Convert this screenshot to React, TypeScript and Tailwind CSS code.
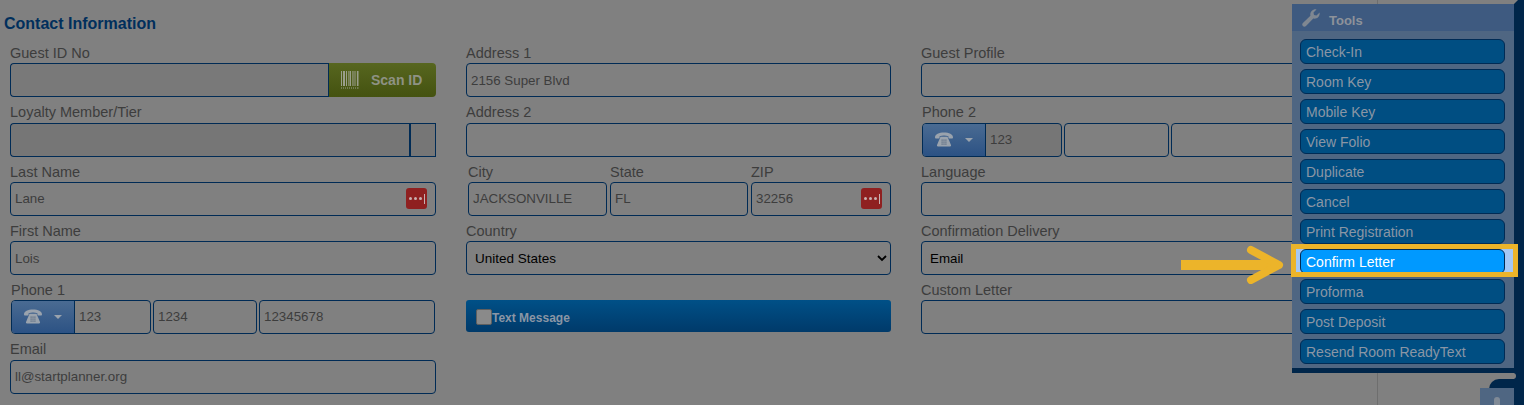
const FONT = "font-['Liberation_Sans',Arial,sans-serif]";

const toolItems = [
  "Check-In",
  "Room Key",
  "Mobile Key",
  "View Folio",
  "Duplicate",
  "Cancel",
  "Print Registration",
  "Confirm Letter",
  "Proforma",
  "Post Deposit",
  "Resend Room ReadyText",
];

function Label({ children, className = "" }: { children: React.ReactNode; className?: string }) {
  return <div className={`h-[16px] whitespace-nowrap text-[14.5px] leading-[16px] text-[#3d3d3d] ${className}`}>{children}</div>;
}

function Input({ value, className = "", dots = false }: { value?: string; className?: string; dots?: boolean }) {
  return (
    <div className={`flex h-[34px] items-center justify-between rounded-[4px] border border-[#002b55] pl-[4px] pr-[8px] text-[13.33px] text-[#3d3d3d] ${className}`}>
      <span className="pt-px">{value}</span>
      {dots && <DotsBadge />}
    </div>
  );
}

function DotsBadge() {
  return (
    <span className="flex h-[21px] w-[21px] items-center justify-center gap-[2px] rounded-[3px] bg-[#8f2020]">
      <span className="h-[3px] w-[3px] rounded-full bg-[#c9b0b0]" />
      <span className="h-[3px] w-[3px] rounded-full bg-[#c9b0b0]" />
      <span className="h-[3px] w-[3px] rounded-full bg-[#c9b0b0]" />
      <span className="h-[10px] w-px bg-[#c9b0b0]" />
    </span>
  );
}

function PhoneIcon() {
  return (
    <svg width="18" height="16" viewBox="0 0 18 16" fill="#9aa3ad">
      <path d="M0 5.500C0 2 4 .5 9 .5s9 1.500 9 5c0 .6-.3 1-.8 1h-3c-.5 0-.8-.4-.8-1V4.200C12 3.600 10.500 3.400 9 3.400s-3 .2-4.400.8v1.300c0 .6-.3 1-.8 1h-3C.3 6.500 0 6.100 0 5.500z" />
      <path d="M5.500 4.800h7l3.500 8.200c.2.6 0 1.500-1 1.500H3c-1 0-1.200-.9-1-1.500z" />
      <g fill="#5a6b80">
        <rect x="6.500" y="7.500" width="1.200" height="1.200" />
        <rect x="8.400" y="7.500" width="1.200" height="1.200" />
        <rect x="10.300" y="7.500" width="1.200" height="1.200" />
        <rect x="6.500" y="9.500" width="1.200" height="1.200" />
        <rect x="8.400" y="9.500" width="1.200" height="1.200" />
        <rect x="10.300" y="9.500" width="1.200" height="1.200" />
        <rect x="6.500" y="11.500" width="1.200" height="1.200" />
        <rect x="8.400" y="11.500" width="1.200" height="1.200" />
        <rect x="10.300" y="11.500" width="1.200" height="1.200" />
      </g>
    </svg>
  );
}

function PhoneRow({ a, b, c, firstBg = "", midWidth = "w-[104px]" }: { a?: string; b?: string; c?: string; firstBg?: string; midWidth?: string }) {
  return (
    <div className="flex h-[34px] gap-[2px] text-[13.33px] text-[#3d3d3d]">
      <div className={`flex w-[140px] rounded-[4px] border border-[#002b55] ${firstBg}`}>
        <div className="flex w-[63px] items-center gap-[12px] rounded-l-[3px] border-r border-[#002b55] bg-gradient-to-b from-[#4a6b92] to-[#2c5284] pl-[12px]">
          <PhoneIcon />
          <span className="h-0 w-0 border-x-[4px] border-t-[4px] border-x-transparent border-t-[#9aa3ad]" />
        </div>
        <div className="flex items-center pl-[4px]">{a}</div>
      </div>
      <div className={`flex items-center rounded-[4px] border border-[#002b55] pl-[4px] ${midWidth}`}>{b}</div>
      <div className="flex flex-1 items-center rounded-[4px] border border-[#002b55] pl-[4px]">{c}</div>
    </div>
  );
}

function Barcode() {
  return (
    <svg width="18" height="18" viewBox="0 0 18 18" fill="#9a9f8c">
      <path d="M0 0h1v15H0zM2 0h2v15H2zM5 0h1v15H5zM7 0h.6v15H7zM8.500 0h1.500v15H8.500zM11 0h.6v15H11zM12.500 0h1v15h-1zM14.500 0h.6v15h-.6zM16 0h1.500v15H16z" />
      <path d="M0 16.500h1v1H0zM2 16.500h1v1H2zM4 16.500h1v1H4zM6 16.500h1v1H6zM8 16.500h1v1H8zM10 16.500h1v1h-1zM12 16.500h1v1h-1zM14 16.500h1v1h-1zM16 16.500h1.500v1H16z" />
    </svg>
  );
}

function ToolsPanel() {
  return (
    <div className="absolute left-[1292px] top-[4px] w-[222px]">
      <div className="bg-[#4f6682]">
        <div className="flex h-[27px] items-center bg-[#3e5a80] pl-[10px]">
          <svg width="18" height="18" viewBox="0 0 18 18" fill="#7f8791">
            <path d="M17.600 3.600c.3 1.700-.2 3.500-1.500 4.700-1.300 1.300-3.100 1.700-4.800 1.300L4 17c-.9.900-2.300.9-3.100 0-.9-.9-.9-2.200 0-3.100L8.400 6.700C8 5 8.400 3.200 9.700 1.900 11 .6 12.800.1 14.500.4l-3 3 .5 2.500 2.500.6z" />
          </svg>
          <span className="ml-[9px] pt-[6px] text-[13px] font-bold text-[#8d929a]">Tools</span>
        </div>
        <div className="flex flex-col gap-[5px] pb-[4px] pl-[8px] pr-[9px] pt-[8px]">
          {toolItems.map((item) =>
            item === "Confirm Letter" ? (
              <div key={item} className="relative h-[25px]">
                <div className="absolute -bottom-[3px] -left-[9px] -right-[13px] -top-[5px] bg-[#a5c8f5]" />
                <div className="relative flex h-[25px] items-center rounded-[6px] border border-[#002b55] bg-[#0099ff] pl-[5px] pt-px text-[14px] text-white">
                  {item}
                </div>
                <div className="absolute -bottom-[3px] -left-[9px] -right-[13px] -top-[5px] border-[5px] border-[#ecb42a]" />
              </div>
            ) : (
              <div key={item} className="flex h-[25px] items-center rounded-[6px] border border-[#002b55] bg-[#004e82] pl-[5px] pt-px text-[14px] text-[#8a96a5]">
                {item}
              </div>
            ),
          )}
        </div>
      </div>
      <div className="h-[5px] bg-[#00264a]" />
    </div>
  );
}

function RightEdge() {
  return (
    <>
      <div className="absolute bottom-0 left-[1514px] top-0 w-[10px] bg-[#00264a]" />
      <div className="absolute left-[1514px] top-0 h-0 w-0 border-r-[4px] border-t-[4px] border-r-transparent border-t-[#808080]" />
      <div className="absolute left-[1489px] top-[379px] h-[10px] w-[25px] rounded-tl-[11px] bg-[#00264a]" />
      <div className="absolute left-[1500px] top-[373px] h-[6px] w-[16px] rounded-r-full bg-[#808080]" />
      <div className="absolute left-[1480px] top-[388px] flex h-[17px] w-[34px] justify-center bg-[#4f6682] pt-[9px]">
        <span className="h-[8px] w-[6px] rounded-t-full bg-[#808a96]" />
      </div>
    </>
  );
}

function Arrow() {
  return (
    <svg className="absolute left-[1178px] top-[244px]" width="110" height="40" viewBox="0 0 110 40" fill="none" stroke="#ecb42a">
      <path d="M3 21h92" strokeWidth="10" />
      <path d="M73 6l28 15-28 15" strokeWidth="8" strokeLinecap="round" strokeLinejoin="round" />
    </svg>
  );
}

export default function App() {
  return (
    <div className={`relative h-[405px] w-[1524px] overflow-hidden bg-[#808080] ${FONT}`}>
      <div className="absolute bottom-0 left-[1377px] top-0 w-px bg-[#6e6e6e]" />
      <div className="pl-[4px] pt-[15px] text-[16px] font-bold leading-[18px] text-[#002f5c]">Contact Information</div>

      <div className="flex gap-[30px] pl-[10px] pt-[12px]">
        {/* left column */}
        <div className="flex w-[426px] flex-col gap-[7.15px]">
          <div>
            <Label>Guest ID No</Label>
            <div className="mt-[2.2px] flex h-[34px]">
              <div className="flex-1 rounded-l-[4px] border border-r-0 border-[#002b55] bg-[#797979]" />
              <div className="flex w-[108px] items-center rounded-r-[4px] border-l border-[#002b55] bg-gradient-to-b from-[#57661f] to-[#445210] pl-[12px] text-[14px] font-bold text-[#8e9284]">
                <Barcode />
                <span className="ml-[12px]">Scan ID</span>
              </div>
            </div>
          </div>
          <div>
            <Label>Loyalty Member/Tier</Label>
            <div className="mt-[2.2px] flex h-[34px]">
              <div className="flex-1 rounded-l-[4px] border border-r-0 border-[#002b55] bg-[#767676]" />
              <div className="w-[27px] border border-l-2 border-[#002b55] bg-[#767676]" />
            </div>
          </div>
          <div>
            <Label>Last Name</Label>
            <Input value="Lane" dots className="mt-[2.2px]" />
          </div>
          <div>
            <Label>First Name</Label>
            <Input value="Lois" className="mt-[2.2px]" />
          </div>
          <div className="px-[1px] pb-[0.7px]">
            <Label>Phone 1</Label>
            <div className="mt-[1.5px]">
              <PhoneRow a="123" b="1234" c="12345678" />
            </div>
          </div>
          <div>
            <Label className="-mt-[1px]">Email</Label>
            <Input value="ll@startplanner.org" className="mt-[3.2px]" />
          </div>
        </div>

        {/* middle column */}
        <div className="flex w-[425px] flex-col gap-[7.15px]">
          <div>
            <Label>Address 1</Label>
            <Input value="2156 Super Blvd" className="mt-[2.2px]" />
          </div>
          <div>
            <Label>Address 2</Label>
            <Input className="mt-[2.2px]" />
          </div>
          <div className="flex gap-[3px]">
            <div className="w-[141px] pl-[2px]">
              <Label>City</Label>
              <Input value="JACKSONVILLE" className="mt-[2.2px]" />
            </div>
            <div className="w-[138px]">
              <Label>State</Label>
              <Input value="FL" className="mt-[2.2px]" />
            </div>
            <div className="flex-1">
              <Label>ZIP</Label>
              <Input value="32256" dots className="mt-[2.2px]" />
            </div>
          </div>
          <div>
            <Label>Country</Label>
            <div className="mt-[2.2px] flex h-[34px] items-center justify-between rounded-[4px] border border-[#002b55] pl-[8px] pr-[3px] text-[13.5px] text-black">
              <span className="pt-px">United States</span>
              <svg width="10" height="7" viewBox="0 0 10 7" fill="none" stroke="#000" strokeWidth="1.800">
                <path d="M1 1l4 4 4-4" />
              </svg>
            </div>
          </div>
          <div className="mt-[17.6px] flex h-[32px] items-center rounded-[3px] bg-gradient-to-b from-[#005087] to-[#003a6a] pl-[10px] pt-[2px] text-[12px] font-bold text-[#8a96a5]">
            <span className="h-[16px] w-[16px] rounded-[2px] border border-[#5f5f5f] bg-[#8a8a8a]" />
            <span className="pt-[2px]">Text Message</span>
          </div>
        </div>

        {/* right column, runs on behind the tools panel */}
        <div className="flex w-[425px] flex-col gap-[7.15px]">
          <div>
            <Label>Guest Profile</Label>
            <Input className="mt-[2.2px]" />
          </div>
          <div>
            <Label className="pl-[1px]">Phone 2</Label>
            <div className="mt-[2.2px] pl-[1px]">
              <PhoneRow a="123" firstBg="bg-[#767676]" midWidth="w-[105px]" />
            </div>
          </div>
          <div>
            <Label>Language</Label>
            <Input className="mt-[2.2px]" />
          </div>
          <div>
            <Label>Confirmation Delivery</Label>
            <div className="mt-[2.2px] flex h-[34px] items-center rounded-[4px] border border-[#002b55] pl-[8px] text-[13.33px] text-black">
              <span className="pt-px">Email</span>
            </div>
          </div>
          <div>
            <Label>Custom Letter</Label>
            <Input className="mt-[1.5px]" />
          </div>
        </div>
      </div>

      <RightEdge />
      <ToolsPanel />
      <Arrow />
    </div>
  );
}
